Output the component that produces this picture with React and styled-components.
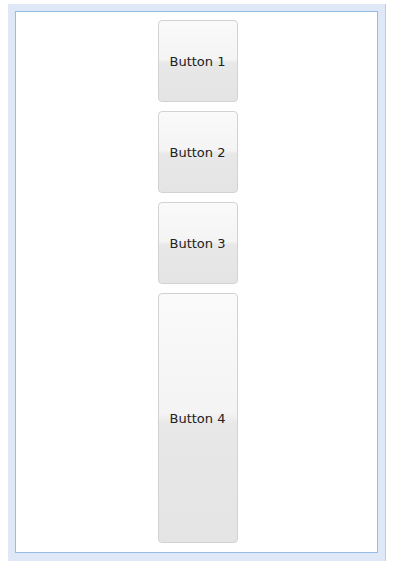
import React from "react";
import styled, { createGlobalStyle } from "styled-components";

const Global = createGlobalStyle`
  html, body { margin: 0; padding: 0; background: #ffffff; }
  body { font-family: "DejaVu Sans", sans-serif; }
`;

const Frame = styled.div`
  box-sizing: border-box;
  margin: 4px 0 0 8px;
  width: 378px;
  height: 557px;
  background: #dfe8f6;
  padding: 7px 7px 8px 7px;
  border-right: 1px solid #b4ccee;
`;

const Panel = styled.div`
  box-sizing: border-box;
  height: 100%;
  background: #ffffff;
  border: 1px solid #99bbe8;
  display: flex;
  flex-direction: column;
  align-items: center;
  gap: 9px;
  padding: 8px 0 8px 2px;
`;

const Button = styled.button`
  box-sizing: border-box;
  width: 80px;
  height: ${(p) => p.$h}px;
  flex: none;
  border: 1px solid #d2d2d2;
  border-radius: 4px;
  background: linear-gradient(
    to bottom,
    #fafafa 0%,
    #f4f4f4 48%,
    #e8e8e8 52%,
    #e4e4e4 100%
  );
  font-family: "DejaVu Sans", Verdana, sans-serif;
  font-size: 13px;
  color: #222222;
  padding: 0;
  display: flex;
  align-items: center;
  justify-content: center;
`;

export default function App() {
  return (
    <>
      <Global />
      <Frame>
        <Panel>
          <Button $h={82}>Button 1</Button>
          <Button $h={82}>Button 2</Button>
          <Button $h={82}>Button 3</Button>
          <Button $h={250}>Button 4</Button>
        </Panel>
      </Frame>
    </>
  );
}
